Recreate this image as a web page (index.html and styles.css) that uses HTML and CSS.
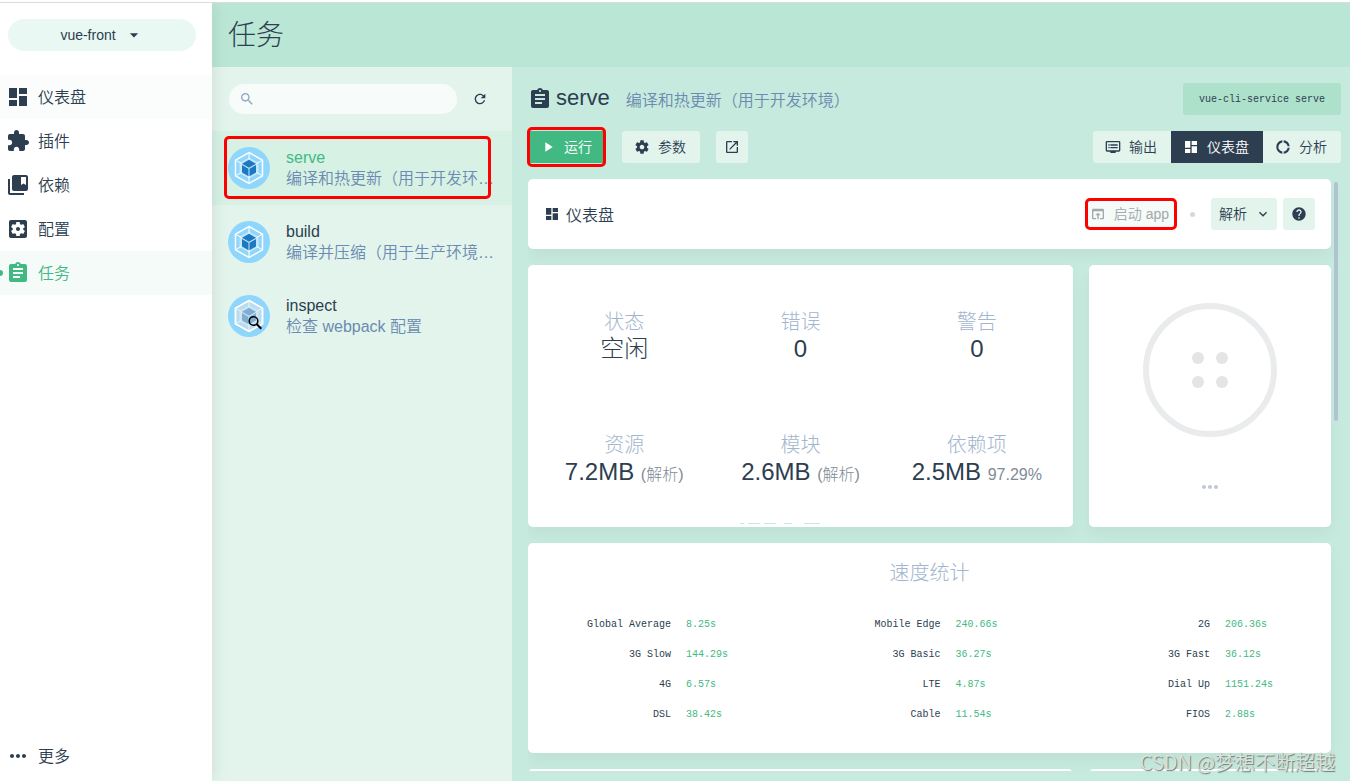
FILE: index.html
```html
<!DOCTYPE html>
<html lang="zh-CN">
<head>
<meta charset="utf-8">
<title>任务 - vue-front</title>
<link rel="stylesheet" href="styles.css">
</head>
<body>
<svg class="sprite" aria-hidden="true">
  <symbol id="i-dashboard" viewBox="0 0 24 24"><path d="M3 13h8V3H3v10zm0 8h8v-6H3v6zm10 0h8V11h-8v10zm0-18v6h8V3h-8z"/></symbol>
  <symbol id="i-extension" viewBox="0 0 24 24"><path d="M20.5 11H19V7c0-1.1-.9-2-2-2h-4V3.5C13 2.12 11.88 1 10.5 1S8 2.12 8 3.5V5H4c-1.1 0-1.99.9-1.99 2v3.8H3.5c1.49 0 2.7 1.21 2.7 2.7s-1.21 2.7-2.7 2.7H2V20c0 1.1.9 2 2 2h3.8v-1.5c0-1.49 1.21-2.7 2.7-2.7 1.49 0 2.7 1.21 2.7 2.7V22H17c1.1 0 2-.9 2-2v-4h1.5c1.38 0 2.5-1.12 2.5-2.5S21.88 11 20.5 11z"/></symbol>
  <symbol id="i-bookmark" viewBox="0 0 24 24"><path d="M4 6H2v14c0 1.1.9 2 2 2h14v-2H4V6z"/><path d="M20 2H8c-1.1 0-2 .9-2 2v12c0 1.1.9 2 2 2h12c1.1 0 2-.9 2-2V4c0-1.1-.9-2-2-2zm0 10l-2.5-1.5L15 12V4h5v8z"/></symbol>
  <symbol id="i-config" viewBox="0 0 24 24"><path d="M12 10c-1.1 0-2 .9-2 2s.9 2 2 2 2-.9 2-2-.9-2-2-2zm7-7H5c-1.11 0-2 .9-2 2v14c0 1.1.89 2 2 2h14c1.11 0 2-.9 2-2V5c0-1.1-.89-2-2-2zm-1.750 9c0 .23-.02.46-.05.68l1.480 1.160c.13.11.17.3.08.45l-1.400 2.420c-.09.15-.27.21-.43.15l-1.740-.7c-.36.28-.76.51-1.180.69l-.26 1.850c-.03.17-.18.3-.35.3h-2.800c-.17 0-.32-.13-.35-.29l-.26-1.850c-.43-.18-.82-.41-1.180-.69l-1.740.7c-.16.06-.34 0-.43-.15l-1.400-2.420c-.09-.15-.05-.34.08-.45l1.480-1.160c-.03-.23-.05-.46-.05-.69s.02-.46.05-.68l-1.480-1.160c-.13-.11-.17-.3-.08-.45l1.400-2.420c.09-.15.27-.21.43-.15l1.740.7c.36-.28.76-.51 1.180-.69l.26-1.850c.03-.17.18-.3.35-.3h2.800c.17 0 .32.13.35.29l.26 1.850c.43.18.82.41 1.180.69l1.740-.7c.16-.06.34 0 .43.15l1.400 2.420c.09.15.05.34-.08.45l-1.480 1.160c.03.23.05.46.05.69z"/></symbol>
  <symbol id="i-task" viewBox="0 0 24 24"><path d="M19 3h-4.180C14.400 1.840 13.300 1 12 1c-1.300 0-2.400.84-2.820 2H5c-1.100 0-2 .9-2 2v14c0 1.100.9 2 2 2h14c1.100 0 2-.9 2-2V5c0-1.100-.9-2-2-2zm-7 0c.55 0 1 .45 1 1s-.45 1-1 1-1-.45-1-1 .45-1 1-1zm2 14H7v-2h7v2zm3-4H7v-2h10v2zm0-4H7V7h10v2z"/></symbol>
  <symbol id="i-more" viewBox="0 0 24 24"><path d="M6 10c-1.100 0-2 .9-2 2s.9 2 2 2 2-.9 2-2-.9-2-2-2zm12 0c-1.100 0-2 .9-2 2s.9 2 2 2 2-.9 2-2-.9-2-2-2zm-6 0c-1.100 0-2 .9-2 2s.9 2 2 2 2-.9 2-2-.9-2-2-2z"/></symbol>
  <symbol id="i-drop" viewBox="0 0 24 24"><path d="M7 10l5 5 5-5z"/></symbol>
  <symbol id="i-search" viewBox="0 0 24 24"><path d="M15.500 14h-.79l-.28-.27C15.410 12.590 16 11.110 16 9.500 16 5.910 13.090 3 9.500 3S3 5.910 3 9.500 5.910 16 9.500 16c1.610 0 3.090-.59 4.230-1.570l.27.28v.79l5 4.990L20.490 19l-4.990-5zm-6 0C7.010 14 5 11.990 5 9.500S7.010 5 9.500 5 14 7.010 14 9.500 11.990 14 9.500 14z"/></symbol>
  <symbol id="i-refresh" viewBox="0 0 24 24"><path d="M17.650 6.350C16.200 4.900 14.210 4 12 4c-4.420 0-7.990 3.580-7.990 8s3.570 8 7.990 8c3.730 0 6.840-2.550 7.730-6h-2.080c-.82 2.330-3.040 4-5.650 4-3.310 0-6-2.690-6-6s2.690-6 6-6c1.660 0 3.140.69 4.220 1.780L13 11h7V4l-2.350 2.350z"/></symbol>
  <symbol id="i-play" viewBox="0 0 24 24"><path d="M8 5v14l11-7z"/></symbol>
  <symbol id="i-settings" viewBox="0 0 24 24"><path d="M19.430 12.980c.04-.32.07-.64.07-.98s-.03-.66-.07-.98l2.110-1.650c.19-.15.24-.42.12-.64l-2-3.460c-.12-.22-.39-.3-.61-.22l-2.490 1c-.52-.4-1.080-.73-1.690-.98l-.38-2.650C14.460 2.180 14.250 2 14 2h-4c-.25 0-.46.18-.49.42l-.38 2.650c-.61.25-1.170.59-1.690.98l-2.490-1c-.23-.09-.49 0-.61.22l-2 3.460c-.13.22-.07.49.12.64l2.110 1.650c-.04.32-.07.65-.07.98s.03.66.07.98l-2.110 1.650c-.19.15-.24.42-.12.64l2 3.460c.12.22.39.3.61.22l2.490-1c.52.4 1.080.73 1.690.98l.38 2.650c.03.24.24.42.49.42h4c.25 0 .46-.18.49-.42l.38-2.650c.61-.25 1.170-.59 1.690-.98l2.490 1c.23.09.49 0 .61-.22l2-3.460c.12-.22.07-.49-.12-.64l-2.110-1.650zM12 15.500c-1.930 0-3.500-1.570-3.500-3.500s1.570-3.500 3.500-3.500 3.500 1.570 3.500 3.500-1.570 3.500-3.500 3.500z"/></symbol>
  <symbol id="i-open" viewBox="0 0 24 24"><path d="M19 19H5V5h7V3H5c-1.110 0-2 .9-2 2v14c0 1.100.89 2 2 2h14c1.100 0 2-.9 2-2v-7h-2v7zM14 3v2h3.590l-9.830 9.830 1.410 1.410L19 6.410V10h2V3h-7z"/></symbol>
  <symbol id="i-output" viewBox="0 0 24 24"><path d="M21 3H3c-1.100 0-2 .9-2 2v12c0 1.100.9 2 2 2h5v2h8v-2h5c1.100 0 1.990-.9 1.990-2L23 5c0-1.100-.9-2-2-2zm0 14H3V5h18v12zm-2-9H8v2h11V8zm0 4H8v2h11v-2zM7 8H5v2h2V8zm0 4H5v2h2v-2z"/></symbol>
  <symbol id="i-donut" viewBox="0 0 24 24"><path d="M11 5.080V2c-5 .5-9 4.810-9 10s4 9.500 9 10v-3.080c-3-.48-6-3.400-6-6.920s3-6.440 6-6.920zM18.970 11H22c-.47-5-4-8.530-9-9v3.080C16 5.510 18.540 8 18.970 11zM13 18.920V22c5-.47 8.530-4 9-9h-3.030c-.43 3-2.970 5.490-5.970 5.920z"/></symbol>
  <symbol id="i-browser" viewBox="0 0 24 24"><path d="M19 4H5c-1.110 0-2 .9-2 2v12c0 1.100.89 2 2 2h4v-2H5V8h14v10h-4v2h4c1.100 0 2-.9 2-2V6c0-1.100-.89-2-2-2zm-7 6l-4 4h3v6h2v-6h3l-4-4z"/></symbol>
  <symbol id="i-help" viewBox="0 0 24 24"><path d="M12 2C6.480 2 2 6.480 2 12s4.480 10 10 10 10-4.480 10-10S17.520 2 12 2zm1 17h-2v-2h2v2zm2.070-7.750l-.9.92C13.450 12.900 13 13.500 13 15h-2v-.5c0-1.100.45-2.100 1.170-2.830l1.240-1.260c.37-.36.59-.86.59-1.410 0-1.100-.9-2-2-2s-2 .9-2 2H8c0-2.210 1.790-4 4-4s4 1.790 4 4c0 .88-.36 1.680-.93 2.250z"/></symbol>
  <symbol id="i-expand" viewBox="0 0 24 24"><path d="M16.590 8.590L12 13.170 7.410 8.590 6 10l6 6 6-6z"/></symbol>
  <symbol id="i-webpack" viewBox="0 0 42 42">
    <circle cx="21" cy="21" r="21" fill="#8ed6fb"/>
    <path d="M21 5.500L34.500 13.200v15.600L21 36.500 7.500 28.800V13.200z" fill="#8ed6fb" stroke="#fff" stroke-width="1.500"/>
    <path d="M21 10.500l9.500 5.300v10.400L21 31.500l-9.500-5.300V15.800z" fill="#c3e7fb"/>
    <path d="M21 12.500v-7M13.500 16.500l-6-3.300M28.500 16.500l6-3.300M13.500 25.500l-6 3.300M28.500 25.500l6 3.300M21 36.500V29" stroke="#fff" stroke-width="1"/>
    <path d="M21 12.800l7 4-7 4-7-4zM14 18l6.500 3.700v7.500L14 25.500zM28 18l-6.500 3.700v7.500l6.500-3.700z" fill="#1c78c0"/>
  </symbol>
</svg>

<div class="app">
  <aside class="sidebar">
    <button class="project" type="button">vue-front<svg class="icon20"><use href="#i-drop"/></svg></button>
    <nav class="nav">
      <a class="nav-item hovered" href="#dashboard"><svg class="icon24"><use href="#i-dashboard"/></svg>仪表盘</a>
      <a class="nav-item" href="#plugins"><svg class="icon24"><use href="#i-extension"/></svg>插件</a>
      <a class="nav-item" href="#dependencies"><svg class="icon24"><use href="#i-bookmark"/></svg>依赖</a>
      <a class="nav-item" href="#configuration"><svg class="icon24"><use href="#i-config"/></svg>配置</a>
      <a class="nav-item active" href="#tasks"><svg class="icon24"><use href="#i-task"/></svg>任务</a>
    </nav>
    <button class="nav-item more" type="button"><svg class="icon24"><use href="#i-more"/></svg>更多</button>
  </aside>

  <div class="page">
    <header class="page-header"><h1>任务</h1></header>
    <div class="body">
      <section class="list">
        <div class="list-tools">
          <label class="search"><svg class="icon16"><use href="#i-search"/></svg><input type="search" aria-label="搜索任务"></label>
          <button class="refresh" type="button" aria-label="刷新"><svg class="icon16"><use href="#i-refresh"/></svg></button>
        </div>
        <a class="task selected" href="#serve">
          <svg class="logo"><use href="#i-webpack"/></svg>
          <span class="task-text"><span class="name">serve</span><span class="desc">编译和热更新（用于开发环…</span></span>
          <span class="mark mark-task"></span>
        </a>
        <a class="task" href="#build">
          <svg class="logo"><use href="#i-webpack"/></svg>
          <span class="task-text"><span class="name">build</span><span class="desc">编译并压缩（用于生产环境…</span></span>
        </a>
        <a class="task" href="#inspect">
          <svg class="logo" viewBox="0 0 42 42">
            <use href="#i-webpack" width="42" height="42"/>
            <path d="M21 5.500L34.500 13.200v15.600L21 36.500 7.500 28.800V13.200z" fill="#dde3e8" opacity=".5"/>
            <path d="M21 5.500L34.500 13.200v15.600L21 36.500 7.500 28.800V13.200z" fill="none" stroke="#fff" stroke-width="1.500"/>
            <circle cx="25.500" cy="26" r="4.300" fill="none" stroke="#000" stroke-width="1.600"/>
            <path d="M28.500 29l4.800 4.800" stroke="#000" stroke-width="2"/>
          </svg>
          <span class="task-text"><span class="name">inspect</span><span class="desc">检查 webpack 配置</span></span>
        </a>
      </section>

      <main class="detail">
        <div class="detail-head">
          <svg class="icon24"><use href="#i-task"/></svg>
          <h2>serve</h2>
          <p class="subtitle">编译和热更新（用于开发环境）</p>
          <code class="command">vue-cli-service serve</code>
        </div>
        <div class="toolbar">
          <button class="btn primary" type="button"><svg class="icon16"><use href="#i-play"/></svg>运行<span class="mark mark-run"></span></button>
          <button class="btn" type="button"><svg class="icon16"><use href="#i-settings"/></svg>参数</button>
          <button class="btn square" type="button" aria-label="打开"><svg class="icon16"><use href="#i-open"/></svg></button>
          <div class="tabs">
            <button class="btn" type="button"><svg class="icon16"><use href="#i-output"/></svg>输出</button>
            <button class="btn current" type="button"><svg class="icon16"><use href="#i-dashboard"/></svg>仪表盘</button>
            <button class="btn" type="button"><svg class="icon16"><use href="#i-donut"/></svg>分析</button>
          </div>
        </div>

        <div class="content">
          <div class="card bar">
            <svg class="icon16"><use href="#i-dashboard"/></svg>
            <h3>仪表盘</h3>
            <button class="launch" type="button" disabled><svg class="icon16"><use href="#i-browser"/></svg>启动 app<span class="mark mark-launch"></span></button>
            <span class="dot"></span>
            <span class="select"><select aria-label="体积类型"><option>解析</option></select><svg class="icon16"><use href="#i-expand"/></svg></span>
            <button class="btn square" type="button" aria-label="帮助"><svg class="icon16"><use href="#i-help"/></svg></button>
          </div>

          <div class="row">
            <div class="card stats">
              <div class="stat"><span class="label">状态</span><span class="value">空闲</span></div>
              <div class="stat"><span class="label">错误</span><span class="value">0</span></div>
              <div class="stat"><span class="label">警告</span><span class="value">0</span></div>
              <div class="stat"><span class="label">资源</span><span class="value">7.2MB <small>(解析)</small></span></div>
              <div class="stat"><span class="label">模块</span><span class="value">2.6MB <small>(解析)</small></span></div>
              <div class="stat"><span class="label">依赖项</span><span class="value">2.5MB <small>97.29%</small></span></div>
              <svg class="clip" viewBox="0 0 80 1"><path d="M0 .5h4M8 .5h12M24 .5h12M44 .5h8M64 .5h16" stroke="#c6eadd"/></svg>
            </div>
            <div class="card progress">
              <svg class="ring" viewBox="0 0 134 134"><circle cx="67" cy="67" r="64" fill="none" stroke="#e9ebec" stroke-width="6"/><g fill="#e4e4e4"><circle cx="55" cy="55" r="6"/><circle cx="79" cy="55" r="6"/><circle cx="55" cy="79" r="6"/><circle cx="79" cy="79" r="6"/></g></svg>
              <svg class="icon24"><use href="#i-more"/></svg>
            </div>
          </div>

          <div class="card speed">
            <h3>速度统计</h3>
            <div class="speed-grid">
              <dl><dt>Global Average</dt><dd>8.25s</dd><dt>3G Slow</dt><dd>144.29s</dd><dt>4G</dt><dd>6.57s</dd><dt>DSL</dt><dd>38.42s</dd></dl>
              <dl><dt>Mobile Edge</dt><dd>240.66s</dd><dt>3G Basic</dt><dd>36.27s</dd><dt>LTE</dt><dd>4.87s</dd><dt>Cable</dt><dd>11.54s</dd></dl>
              <dl><dt>2G</dt><dd>206.36s</dd><dt>3G Fast</dt><dd>36.12s</dd><dt>Dial Up</dt><dd>1151.24s</dd><dt>FIOS</dt><dd>2.88s</dd></dl>
            </div>
          </div>

          <div class="row next"><div class="card"></div><div class="card"></div></div>
          <span class="thumb"></span>
        </div>
      </main>
    </div>
  </div>
</div>
<div class="watermark">CSDN @梦想不断超越</div>
</body>
</html>
```
FILE: styles.css
```css
* { box-sizing: border-box; }

body {
  margin: 0;
  overflow: hidden;
  color: #2c3e50;
  font: 350 16px/21px "Liberation Sans", "Noto Sans CJK SC", sans-serif;
}

h1, h2, h3, p, dl, dd { margin: 0; font-weight: inherit; }
a { color: inherit; text-decoration: none; }
button, input, select { font: inherit; color: inherit; border: 0; padding: 0; background: none; }
svg { fill: currentColor; flex: none; display: block; }

.sprite { position: absolute; width: 0; height: 0; }
.icon16 { width: 16px; height: 16px; }
.icon20 { width: 20px; height: 20px; }
.icon24 { width: 24px; height: 24px; }

.app {
  display: flex;
  height: calc(100vh - 2px);
  margin-top: 2px;
  border-top: 1px solid #d9dcdb;
  background: #fff;
}

.sidebar {
  position: relative;
  z-index: 1;
  display: flex;
  flex-direction: column;
  width: 212px;
  flex: none;
  padding-bottom: 3px;
  background: #fff;
  box-shadow: 0 0 16px rgba(0, 0, 0, .1);
  clip-path: inset(0 -20px 0 0);
}

.project {
  display: flex;
  align-items: center;
  justify-content: center;
  gap: 8px;
  height: 32px;
  margin: 16px 16px 24px 8px;
  border-radius: 16px;
  background: #eaf8f3;
  font-size: 14px;
}

.nav { flex: 1; }
.nav-item {
  position: relative;
  display: flex;
  align-items: center;
  gap: 8px;
  width: 100%;
  height: 44px;
  padding-left: 6px;
}
.hovered { background: #fafdfc; }
.active { background: #f5fbf9; color: #42b983; }
.active::before {
  content: "";
  position: absolute;
  left: -3px;
  top: 19px;
  width: 6px;
  height: 6px;
  border-radius: 50%;
  background: #42b983;
}

.page { flex: 1; min-width: 0; display: flex; flex-direction: column; }
.page-header { height: 64px; padding: 2px 16px 0; background: #bae6d5; }
.page-header h1 { font-size: 28px; line-height: 62px; font-weight: 300; }

.body { flex: 1; min-height: 0; display: flex; }
.list { width: 300px; flex: none; background: #e3f4ed; }
.list-tools { display: flex; align-items: center; justify-content: space-between; height: 64px; padding: 0 16px 0 17px; }
.search {
  display: flex;
  align-items: center;
  gap: 8px;
  width: 228px;
  height: 30px;
  padding: 0 10px;
  border-radius: 15px;
  background: #f7fbfa;
  color: #8aa5c2;
}
.search input { flex: 1; min-width: 0; outline: 0; }
.refresh { display: grid; place-items: center; width: 32px; height: 32px; }

.task { position: relative; display: flex; gap: 16px; padding: 16px; }
.selected { background: #d7f1e5; }
.selected .name { color: #42b983; }
.logo { width: 42px; height: 42px; }
.task-text { flex: 1; min-width: 0; }
.name, .desc { display: block; white-space: nowrap; }
.desc { color: #6b8bb0; }

.mark { position: absolute; border: 3px solid #f00; border-radius: 5px; pointer-events: none; }
.mark-task { inset: 5px 21px 6px 12px; }
.mark-run { inset: -4px 0 -4px -1px; }
.mark-launch { inset: 0; }

.detail { flex: 1; min-width: 0; display: flex; flex-direction: column; padding: 16px 9px 10px 16px; background: #c6eadd; }
.detail-head { display: flex; align-items: center; height: 32px; }
.detail-head h2 { margin: 0 16px 4px 4px; font-size: 22px; }
.subtitle { flex: 1; padding-top: 2px; color: #6b8bb0; }
.command {
  height: 32px;
  padding: 2px 16px 0;
  border-radius: 3px;
  background: #ade1cb;
  font: 10px/30px "Liberation Mono", monospace;
}

.toolbar { display: flex; gap: 16px; margin: 16px 0; }
.btn {
  position: relative;
  display: flex;
  align-items: center;
  gap: 8px;
  height: 32px;
  padding: 0 14px 0 12px;
  border-radius: 3px;
  background: #e3f4ed;
  font-size: 14px;
  white-space: nowrap;
}
.primary { background: #42b983; color: #fff; }
.square { width: 32px; padding: 0 8px; }
.tabs { display: flex; margin-left: auto; border-radius: 3px; overflow: hidden; }
.tabs .btn { border-radius: 0; }
.tabs .current { background: #2c3e50; color: #fff; }

.content { position: relative; flex: 1; min-height: 0; overflow: hidden; display: flex; flex-direction: column; gap: 16px; padding-right: 10px; }
.card { border-radius: 5px; background: #fff; box-shadow: 0 8px 16px rgba(0, 0, 0, .04); flex: none; }
.thumb { position: absolute; right: 3px; top: 3px; width: 4px; height: 239px; border-radius: 2px; background: #b0c4cf; }

.bar { display: flex; align-items: center; height: 70px; padding: 0 16px; }
.bar h3 { flex: 1; margin-left: 6px; padding-top: 2px; font-size: 16px; }
.launch {
  position: relative;
  display: flex;
  align-items: center;
  gap: 8px;
  height: 32px;
  padding: 0 8px 0 5px;
  border-radius: 5px;
  background: #f4fbf8;
  color: #a3a8ac;
  font-size: 14px;
}
.dot { width: 5px; height: 5px; margin: 0 16px 0 13px; border-radius: 50%; background: #d3d8dc; }
.select { position: relative; margin-right: 6px; }
.select select { appearance: none; width: 66px; height: 32px; padding: 0 8px; border-radius: 3px; background: #e3f4ed; font-size: 14px; display: block; }
.select svg { position: absolute; right: 6px; top: 8px; pointer-events: none; }

.row { display: grid; grid-template-columns: 545fr 242fr; gap: 16px; flex: none; }
.stats { position: relative; display: grid; grid-template-columns: repeat(3, 1fr); padding: 8px; font-weight: 300; }
.stat { display: flex; flex-direction: column; align-items: center; height: 123px; padding-top: 35px; white-space: nowrap; }
.label { color: #a2b6ce; font-size: 20px; line-height: 28px; }
.value { font-size: 24px; line-height: 26px; }
.value small { color: #808b96; font-size: 16px; line-height: 16px; }
.clip { position: absolute; left: 212px; bottom: 3px; width: 80px; height: 1px; }

.progress { display: flex; flex-direction: column; align-items: center; padding-top: 38px; gap: 38px; color: #c0c8d0; }
.ring { width: 134px; height: 134px; }

.speed { padding: 17px 0 23px; }
.speed h3 { margin-bottom: 24px; text-align: center; color: #a2b6ce; font-size: 20px; line-height: 26px; font-weight: 300; }
.speed-grid { display: flex; justify-content: space-between; padding: 0 42px 0 47px; }
.speed dl { display: grid; grid-template-columns: 96px 64px; column-gap: 15px; font: 10px/30px "Liberation Mono", monospace; }
.speed dt { text-align: right; }
.speed dd { color: #42b983; }

.next .card { height: 210px; }

.watermark {
  position: absolute;
  z-index: 2;
  right: 15px;
  bottom: 6px;
  color: #dbe3df;
  font: 350 20px/26px "Noto Sans CJK SC", sans-serif;
  text-shadow: 1px 1px 1px #6f7a76;
}
```
